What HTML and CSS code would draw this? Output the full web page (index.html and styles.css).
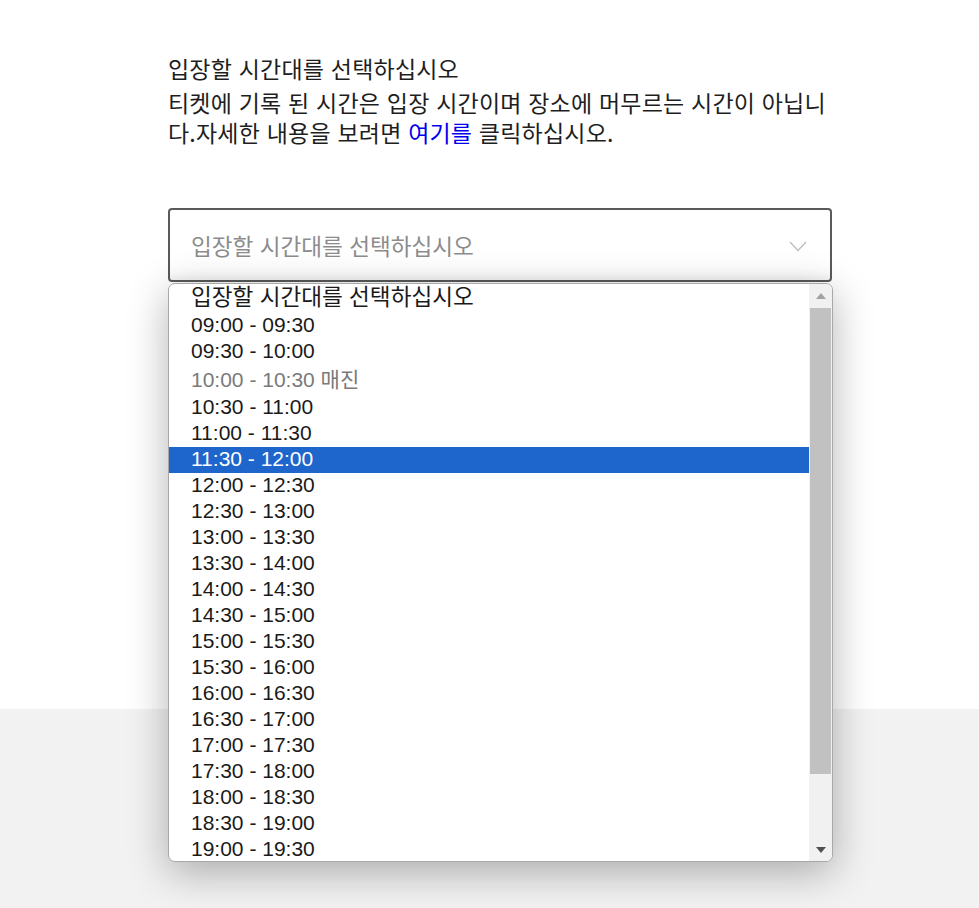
FILE: index.html
```html
<!DOCTYPE html>
<html lang="ko">
<head>
  <meta charset="UTF-8">
  <meta name="viewport" content="width=device-width, initial-scale=1.0">
  <title>입장 시간 선택</title>
  <link rel="stylesheet" href="styles.css">
</head>
<body>
  <div class="main">
    <div class="content">
      <p class="title">입장할 시간대를 선택하십시오</p>
      <p class="note">티켓에 기록 된 시간은 입장 시간이며 장소에 머무르는 시간이 아닙니다.자세한 내용을 보려면 <a href="#">여기를</a> 클릭하십시오.</p>

      <div class="select-wrap">
        <div class="select">
          <span class="placeholder">입장할 시간대를 선택하십시오</span>
          <svg class="chevron" width="18" height="11" viewBox="0 0 18 11">
            <polyline points="1,1 9,9.5 17,1" fill="none" stroke="#bdbdbd" stroke-width="1.3"/>
          </svg>
        </div>

        <div class="listbox">
          <div class="options">
            <div class="opt first">입장할 시간대를 선택하십시오</div>
            <div class="opt">09:00 - 09:30</div>
            <div class="opt">09:30 - 10:00</div>
            <div class="opt disabled">10:00 - 10:30 매진</div>
            <div class="opt">10:30 - 11:00</div>
            <div class="opt">11:00 - 11:30</div>
            <div class="opt selected">11:30 - 12:00</div>
            <div class="opt">12:00 - 12:30</div>
            <div class="opt">12:30 - 13:00</div>
            <div class="opt">13:00 - 13:30</div>
            <div class="opt">13:30 - 14:00</div>
            <div class="opt">14:00 - 14:30</div>
            <div class="opt">14:30 - 15:00</div>
            <div class="opt">15:00 - 15:30</div>
            <div class="opt">15:30 - 16:00</div>
            <div class="opt">16:00 - 16:30</div>
            <div class="opt">16:30 - 17:00</div>
            <div class="opt">17:00 - 17:30</div>
            <div class="opt">17:30 - 18:00</div>
            <div class="opt">18:00 - 18:30</div>
            <div class="opt">18:30 - 19:00</div>
            <div class="opt">19:00 - 19:30</div>
          </div>
          <div class="scrollbar">
            <div class="arrow up"></div>
            <div class="thumb"></div>
            <div class="arrow down"></div>
          </div>
        </div>
      </div>
    </div>
  </div>
  <div class="footer"></div>
</body>
</html>
```

FILE: styles.css
```css
body {
  margin: 0;
  background-color: #ffffff;
  font-family: "Noto Sans CJK KR", "Liberation Sans", sans-serif;
  color: #1e1e1e;
}
.main {
  height: 709px;
  background-color: #ffffff;
}
.content {
  width: 664px;
  padding: 53px 0 0 168px;
}
.title, .note {
  margin: 0;
  font-size: 23px;
  line-height: 30px;
  letter-spacing: 0.2px;
}
.title {
  margin-bottom: 4px;
}
.note a {
  color: #0000ee;
  text-decoration: none;
}
.select-wrap {
  position: relative;
  margin-top: 61px;
}
.select {
  height: 70px;
  border: 2px solid #5a5a5a;
  border-radius: 4px;
  display: flex;
  align-items: center;
  justify-content: space-between;
  padding: 0 23px 0 21px;
  box-shadow: inset 0 -10px 12px -8px rgba(0, 0, 0, 0.07);
}
.placeholder {
  font-size: 22.6px;
  color: #8c8c8c;
}
.chevron {
  margin-top: 2px;
}
.listbox {
  position: absolute;
  top: 75px;
  left: 0;
  width: 663px;
  height: 577px;
  border: 1px solid #a8a8a8;
  border-radius: 7px;
  background-color: #ffffff;
  overflow: hidden;
  display: flex;
  box-shadow: 0 10px 40px rgba(0, 0, 0, 0.3);
}
.options {
  flex: 1;
  overflow: hidden;
  font-family: "Liberation Sans", "Noto Sans CJK KR", sans-serif;
  font-size: 21px;
  color: #1a1a1a;
}
.opt {
  height: 26px;
  line-height: 24px;
  padding-left: 22px;
  white-space: nowrap;
}
.opt.first {
  height: 29px;
  line-height: 28px;
  font-size: 22.6px;
}
.opt.disabled {
  height: 30px;
  line-height: 30px;
  color: #7a7a7a;
}
.opt.selected {
  background-color: #1f66cc;
  color: #ffffff;
}
.scrollbar {
  width: 23px;
  background-color: #f1f1f1;
  display: flex;
  flex-direction: column;
  align-items: center;
}
.arrow {
  width: 0;
  height: 0;
  border-left: 5px solid transparent;
  border-right: 5px solid transparent;
}
.arrow.up {
  margin: 9px 0 9px;
  border-bottom: 6px solid #a3a3a3;
}
.thumb {
  width: 21px;
  height: 466px;
  background-color: #c1c1c1;
}
.arrow.down {
  margin-top: auto;
  margin-bottom: 8px;
  border-top: 6px solid #505050;
}
.footer {
  height: 199px;
  background-color: #f2f2f2;
}
```
